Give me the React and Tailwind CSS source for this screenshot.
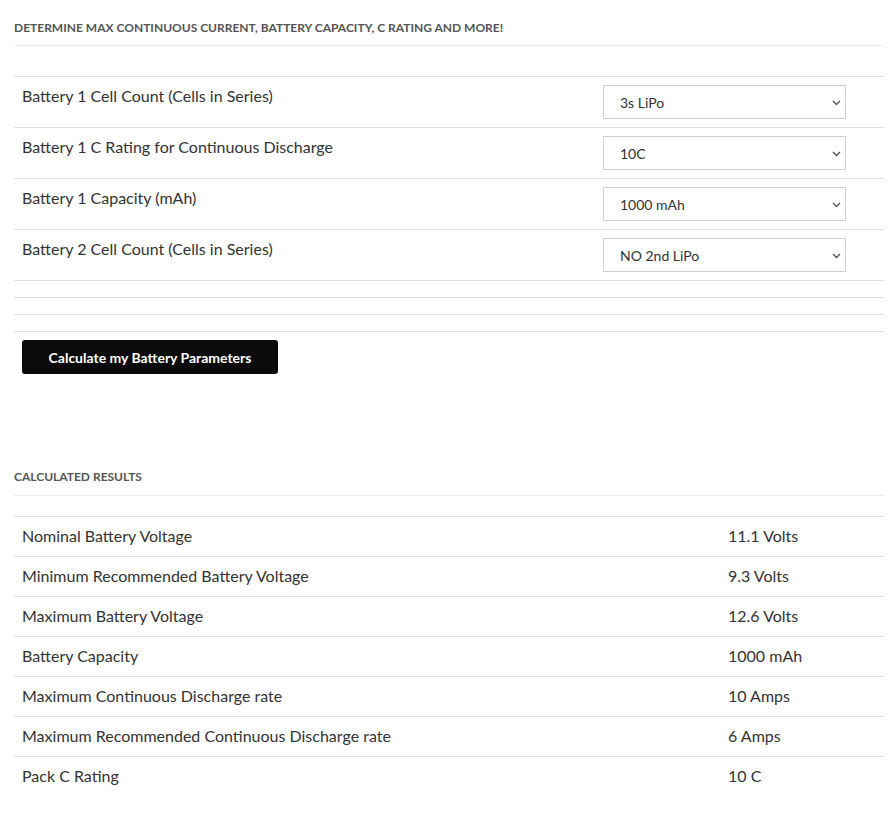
import React from "react";

const inputs = [
  ["Battery 1 Cell Count (Cells in Series)", "3s LiPo"],
  ["Battery 1 C Rating for Continuous Discharge", "10C"],
  ["Battery 1 Capacity (mAh)", "1000 mAh"],
  ["Battery 2 Cell Count (Cells in Series)", "NO 2nd LiPo"],
];

const results = [
  ["Nominal Battery Voltage", "11.1 Volts"],
  ["Minimum Recommended Battery Voltage", "9.3 Volts"],
  ["Maximum Battery Voltage", "12.6 Volts"],
  ["Battery Capacity", "1000 mAh"],
  ["Maximum Continuous Discharge rate", "10 Amps"],
  ["Maximum Recommended Continuous Discharge rate", "6 Amps"],
  ["Pack C Rating", "10 C"],
];

function Select({ value }) {
  return (
    <div className="relative w-[243px] h-[34px]">
      <select
        defaultValue={value}
        className="appearance-none w-full h-full border border-[#cfcfcf] bg-white pl-[16px] pr-8 text-[14px] text-[#333] outline-none"
        style={{ fontFamily: "Lato, sans-serif" }}
      >
        <option>{value}</option>
      </select>
      <svg
        className="pointer-events-none absolute right-[5px] top-[15px]"
        width="9"
        height="6"
        viewBox="0 0 9 6"
      >
        <path d="M1 1 L4.5 4.5 L8 1" fill="none" stroke="#555" strokeWidth="1.4" />
      </svg>
    </div>
  );
}

export default function App() {
  return (
    <div
      className="bg-white pl-[14px] pr-[8px] pb-[18px] text-[#333]"
      style={{ fontFamily: "Lato, sans-serif" }}
    >
      <div className="pt-[21px] pb-[10px] border-b border-[#ececec] text-[12px] leading-[14px] font-bold uppercase text-[#555]">
        Determine max continuous current, battery capacity, C rating and more!
      </div>

      <div className="mt-[30px] border-b border-[#dedede]">
        {inputs.map(([label, value]) => (
          <div key={label} className="flex border-t border-[#dedede] py-2">
            <div className="flex-1 px-2 text-[16px] leading-[22px] text-[#333]">{label}</div>
            <div className="w-[289px] px-2">
              <Select value={value} />
            </div>
          </div>
        ))}
        <div className="border-t border-[#dedede] h-[17px]" />
        <div className="border-t border-[#dedede] h-[17px]" />
        <div className="border-t border-[#dedede] h-[17px]" />
      </div>

      <button className="mt-[8px] ml-[8px] h-[34px] w-[256px] rounded-[3px] bg-[#0b0b0b] text-white text-[14px] font-bold">
        Calculate my Battery Parameters
      </button>

      <div className="mt-[96px] pb-[11px] border-b border-[#ececec] text-[12px] leading-[14px] font-bold uppercase text-[#555]">
        Calculated results
      </div>

      <div className="mt-[20px]">
        {results.map(([label, value]) => (
          <div key={label} className="flex border-t border-[#dedede] pt-[7px] pb-[9px] text-[16px] leading-[23px]">
            <div className="w-[706px] px-2">{label}</div>
            <div className="flex-1 px-2">{value}</div>
          </div>
        ))}
      </div>
    </div>
  );
}
